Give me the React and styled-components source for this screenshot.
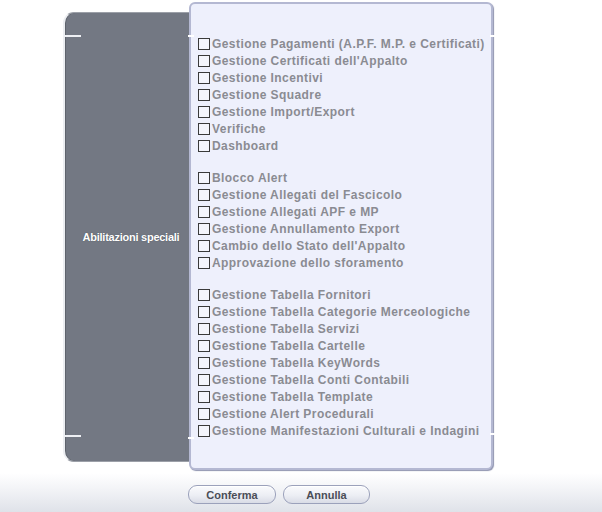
import React from 'react';
import styled, { createGlobalStyle } from 'styled-components';

const GlobalStyle = createGlobalStyle`
  html, body {
    margin: 0;
    padding: 0;
    background: #ffffff;
    font-family: "Liberation Sans", Arial, sans-serif;
  }
`;

const Page = styled.div`
  width: 602px;
  height: 512px;
  display: flex;
  flex-direction: column;
  overflow: hidden;
`;

const Main = styled.div`
  display: flex;
  align-items: flex-start;
  padding: 2px 0 0 63px;
  height: 473px;
  box-sizing: border-box;
`;

const SideLabel = styled.div`
  position: relative;
  box-sizing: border-box;
  width: 126px;
  height: 450px;
  margin-top: 10px;
  background: #737883;
  border-left: 2px solid #eceef2;
  border-top: 1px solid #9ca0a8;
  border-bottom: 1px solid #9ca0a8;
  border-radius: 11px 0 0 11px;
  box-shadow: inset 1px 0 0 #5e636c;
  display: flex;
  align-items: center;
  justify-content: center;
  padding-left: 8px;
  color: #ffffff;
  font-weight: bold;
  font-size: 11px;
  letter-spacing: -0.25px;
  text-shadow: 0 0 1px rgba(40, 44, 52, 0.6);

  &::before,
  &::after {
    content: '';
    position: absolute;
    left: -2px;
    width: 18px;
    height: 2px;
    background: #eef0f4;
  }
  &::before { top: 22px; }
  &::after { bottom: 24px; }
`;

const Tick = styled.span`
  position: absolute;
  ${p => (p.$side === 'left' ? 'left: -3px;' : 'right: -5px;')}
  top: ${p => p.$top}px;
  width: 6px;
  height: 2px;
  background: #ffffff;
`;

const ListPanel = styled.div`
  position: relative;
  box-sizing: border-box;
  width: 304px;
  height: 468px;
  background: #eef0fc;
  border: 2px solid #b4b8d2;
  border-radius: 6px;
  box-shadow: 1px 1px 1px #8f94b0;
  padding: 31px 0 0 7px;
`;

const Group = styled.div`
  & + & {
    margin-top: 15px;
  }
`;

const Row = styled.label`
  display: flex;
  align-items: center;
  height: 17px;
  color: #8a8b92;
  font-weight: bold;
  font-size: 12px;
  letter-spacing: 0.43px;
  white-space: nowrap;
`;

const Box = styled.span`
  box-sizing: border-box;
  width: 12px;
  height: 12px;
  margin-right: 2px;
  border: 1px solid #3a3a3a;
  background: #f4f5fc;
  flex: none;
`;

const Footer = styled.div`
  flex: 1;
  display: flex;
  align-items: center;
  gap: 7px;
  padding: 4px 0 0 188px;
  background: linear-gradient(#ffffff 0%, #f3f4f7 40%, #dfe2e9 100%);
`;

const Button = styled.button`
  box-sizing: border-box;
  width: ${p => p.$w}px;
  height: 19px;
  padding: 0;
  border: 1px solid #9ba1bb;
  border-radius: 9px;
  background: linear-gradient(#fafbfd 0%, #eceef4 55%, #d9dce6 100%);
  box-shadow: inset 0 1px 0 #ffffff;
  color: #4a4d57;
  font-family: "Liberation Sans", Arial, sans-serif;
  font-weight: bold;
  font-size: 11px;
  cursor: pointer;
`;

const groups = [
  [
    'Gestione Pagamenti (A.P.F. M.P. e Certificati)',
    "Gestione Certificati dell'Appalto",
    'Gestione Incentivi',
    'Gestione Squadre',
    'Gestione Import/Export',
    'Verifiche',
    'Dashboard',
  ],
  [
    'Blocco Alert',
    'Gestione Allegati del Fascicolo',
    'Gestione Allegati APF e MP',
    'Gestione Annullamento Export',
    "Cambio dello Stato dell'Appalto",
    'Approvazione dello sforamento',
  ],
  [
    'Gestione Tabella Fornitori',
    'Gestione Tabella Categorie Merceologiche',
    'Gestione Tabella Servizi',
    'Gestione Tabella Cartelle',
    'Gestione Tabella KeyWords',
    'Gestione Tabella Conti Contabili',
    'Gestione Tabella Template',
    'Gestione Alert Procedurali',
    'Gestione Manifestazioni Culturali e Indagini',
  ],
];

export default function App() {
  return (
    <Page>
      <GlobalStyle />
      <Main>
        <SideLabel>Abilitazioni speciali</SideLabel>
        <ListPanel>
          <Tick $side="left" $top={31} />
          <Tick $side="right" $top={31} />
          <Tick $side="left" $top={433} />
          <Tick $side="right" $top={429} />
          {groups.map((items, gi) => (
            <Group key={gi}>
              {items.map(text => (
                <Row key={text}>
                  <Box />
                  {text}
                </Row>
              ))}
            </Group>
          ))}
        </ListPanel>
      </Main>
      <Footer>
        <Button $w={88}>Conferma</Button>
        <Button $w={87}>Annulla</Button>
      </Footer>
    </Page>
  );
}
